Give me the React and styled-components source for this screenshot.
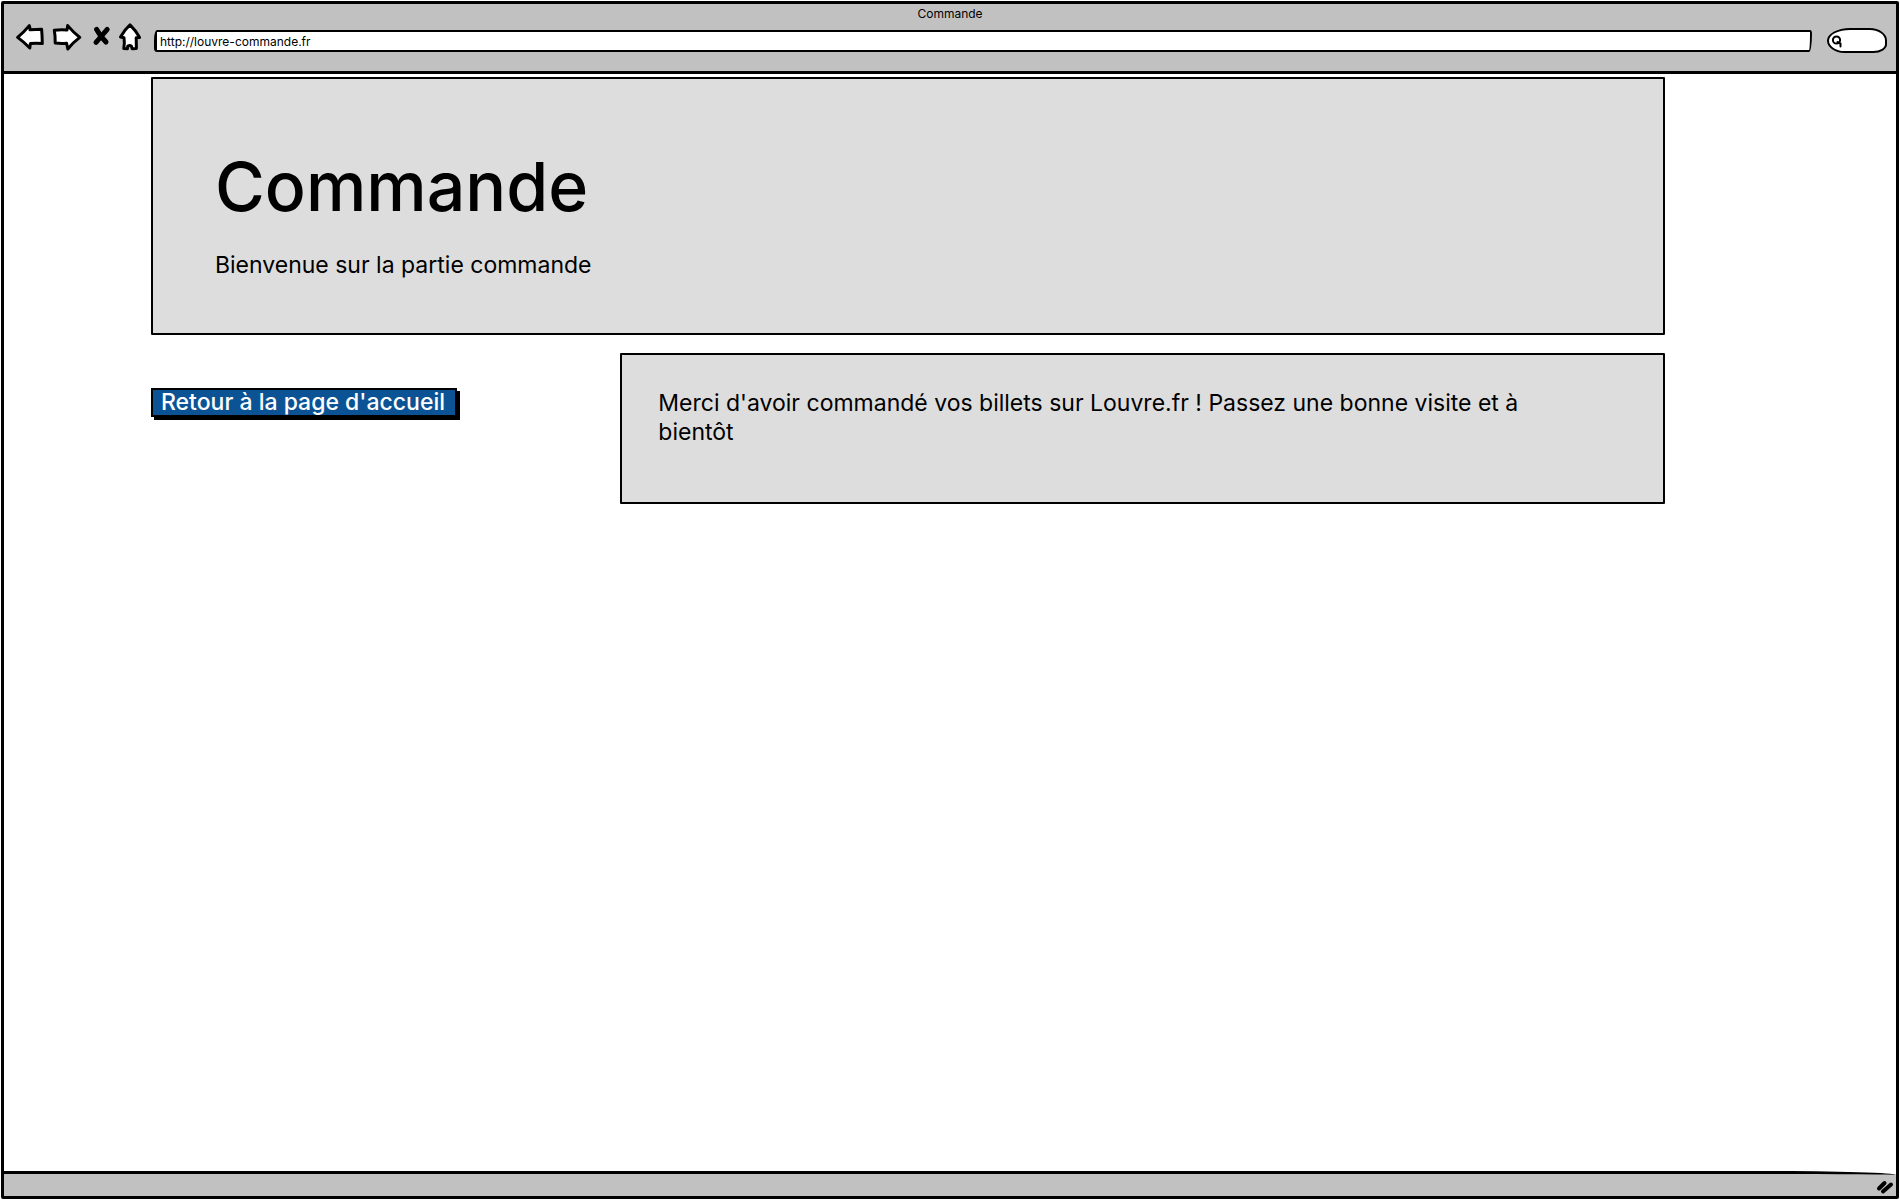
import React from "react";
import styled, { createGlobalStyle } from "styled-components";

const ink = "#000";
const chrome = "#c1c1c1";
const panel = "#dddddd";

const GlobalStyle = createGlobalStyle`
  *, *::before, *::after { box-sizing: border-box; }
  body {
    margin: 0;
    background: #fff;
    color: ${ink};
    font-family: Inter, Lato, sans-serif;
    font-size: 23px;
    line-height: 29px;
  }
`;

const Page = styled.div`
  min-height: 100vh;
  padding: 1px;
  display: flex;
`;

const Window = styled.div`
  flex: 1;
  display: flex;
  flex-direction: column;
  border: 3px solid ${ink};
  border-radius: 2px;
`;

const TitleBar = styled.header`
  height: 70px;
  background: ${chrome};
  border-bottom: 3px solid ${ink};
`;

const WindowTitle = styled.div`
  height: 18px;
  text-align: center;
  font-size: 12px;
  line-height: 20px;
`;

const Toolbar = styled.div`
  display: flex;
  align-items: flex-start;
  padding: 0 9px 0 11px;
`;

const Nav = styled.nav`
  display: flex;
  gap: 7px;
  margin-right: 12px;
`;

const IconButton = styled.button`
  display: block;
  padding: 0;
  border: 0;
  background: none;
  cursor: pointer;

  svg {
    display: block;
    fill: #fff;
    stroke: ${ink};
    stroke-width: ${(p) => (p.$heavy ? 5 : 3)};
    stroke-linecap: round;
    stroke-linejoin: round;
  }
`;

const Address = styled.input`
  flex: 1;
  min-width: 0;
  height: 22px;
  margin: 8px 15px 0 0;
  padding: 0 3px;
  border: 2px solid ${ink};
  border-left-width: 3px;
  border-radius: 3px 2px 3px 3px / 10px 4px 18px 4px;
  background: #fff;
  color: ${ink};
  font: 12px/18px Inter, Lato, sans-serif;
  outline: none;
`;

const Search = styled.label`
  display: flex;
  align-items: center;
  width: 60px;
  height: 25px;
  margin-top: 6px;
  padding-left: 2px;
  border: 2px solid ${ink};
  border-radius: 24px 18px 14px 18px / 13px 13px 9px 13px;
  background: #fff;

  svg {
    flex: none;
    fill: none;
    stroke: ${ink};
    stroke-width: 2;
    stroke-linecap: round;
  }
`;

const SearchInput = styled.input`
  width: 36px;
  height: 16px;
  padding: 0;
  border: 0;
  background: none;
  font: 12px/16px Inter, Lato, sans-serif;
  outline: none;
`;

const Content = styled.main`
  flex: 1;
  padding: 3px 231px 0 147px;
`;

const Panel = styled.section`
  border: 2px solid ${ink};
  border-radius: 1px;
  background: ${panel};
`;

const Banner = styled(Panel)`
  padding: 62px 62px 53px;
`;

const Heading = styled.h1`
  margin: 0 0 20px;
  font-size: 68px;
  line-height: 90px;
  font-weight: 500;
`;

const Text = styled.p`
  margin: 0;
`;

const Columns = styled.div`
  display: grid;
  grid-template-columns: 31% 69%;
  align-items: start;
  margin-top: 18px;
`;

const HomeLink = styled.a`
  justify-self: start;
  margin-top: 35px;
  padding: 0 10px 0 8px;
  border: 2px solid ${ink};
  box-shadow: 3px 3px 0 ${ink};
  background: #0b5394;
  color: #fff;
  font-weight: 500;
  line-height: 25px;
  text-decoration: none;
`;

const Message = styled(Panel)`
  min-height: 151px;
  padding: 34px 90px 34px 36px;
`;

const StatusBar = styled.footer`
  display: flex;
  justify-content: flex-end;
  height: 25px;
  padding: 5px 2px 0 0;
  border-top: 3px solid ${ink};
  border-top-right-radius: 130px 4px;
  background: ${chrome};

  svg {
    stroke: ${ink};
    stroke-width: 4;
    stroke-linecap: round;
  }
`;

export default function App() {
  return (
    <Page>
      <GlobalStyle />
      <Window>
        <TitleBar>
          <WindowTitle>Commande</WindowTitle>
          <Toolbar>
            <Nav aria-label="Navigation">
              <IconButton type="button" aria-label="Précédent">
                <svg width="30" height="30" viewBox="0 0 30 30">
                  <path d="M2.6 15.4Q9 10 14.3 3.6Q15.2 5.5 15 7.8L26.6 7.2Q27.2 14 27.3 21.6Q21 20.8 15.4 21.6L14.8 26Q9 20 2.6 15.4Z" />
                </svg>
              </IconButton>
              <IconButton type="button" aria-label="Suivant">
                <svg width="30" height="30" viewBox="0 0 30 30">
                  <path d="M2.3 8.2Q9 7.4 15 8L15.7 3.6Q21 10 27.8 15.4Q21 20.5 15.8 27L14.6 21.2Q9 21.8 3.2 21Q3.4 14 2.3 8.2Z" />
                </svg>
              </IconButton>
              <IconButton type="button" aria-label="Arrêter" $heavy>
                <svg width="22" height="30" viewBox="0 0 22 30">
                  <path d="M7.6 7.4L11.6 13.8L17 20M18.2 7.4L12.6 14L7 20.4" />
                </svg>
              </IconButton>
              <IconButton type="button" aria-label="Accueil">
                <svg width="24" height="30" viewBox="0 0 24 30">
                  <path d="M12 2.8Q6.6 7.5 2.5 15L6 15.8Q6.8 21 5.8 26.6L9.4 26.8L9.8 24Q11.8 22.8 13.4 24.2L14.2 26.8L18.4 26.4L18.2 15.8L21.6 15.4Q18 8.6 12 2.8Z" />
                </svg>
              </IconButton>
            </Nav>
            <Address aria-label="Adresse" defaultValue="http://louvre-commande.fr" />
            <Search>
              <svg width="12" height="14" viewBox="0 0 12 14">
                <circle cx="5.5" cy="6" r="3.6" />
                <path d="M6.5 8L9.5 9.6V12.4" />
              </svg>
              <SearchInput type="text" aria-label="Rechercher" />
            </Search>
          </Toolbar>
        </TitleBar>
        <Content>
          <Banner>
            <Heading>Commande</Heading>
            <Text>Bienvenue sur la partie commande</Text>
          </Banner>
          <Columns>
            <HomeLink href="#accueil">Retour à la page d'accueil</HomeLink>
            <Message>
              <Text>
                Merci d'avoir commandé vos billets sur Louvre.fr ! Passez une
                bonne visite et à bientôt
              </Text>
            </Message>
          </Columns>
        </Content>
        <StatusBar>
          <svg width="18" height="16" viewBox="0 0 18 16" aria-hidden="true">
            <path d="M3 9.5L8.5 4M7 12.5L15 5.5" />
          </svg>
        </StatusBar>
      </Window>
    </Page>
  );
}
